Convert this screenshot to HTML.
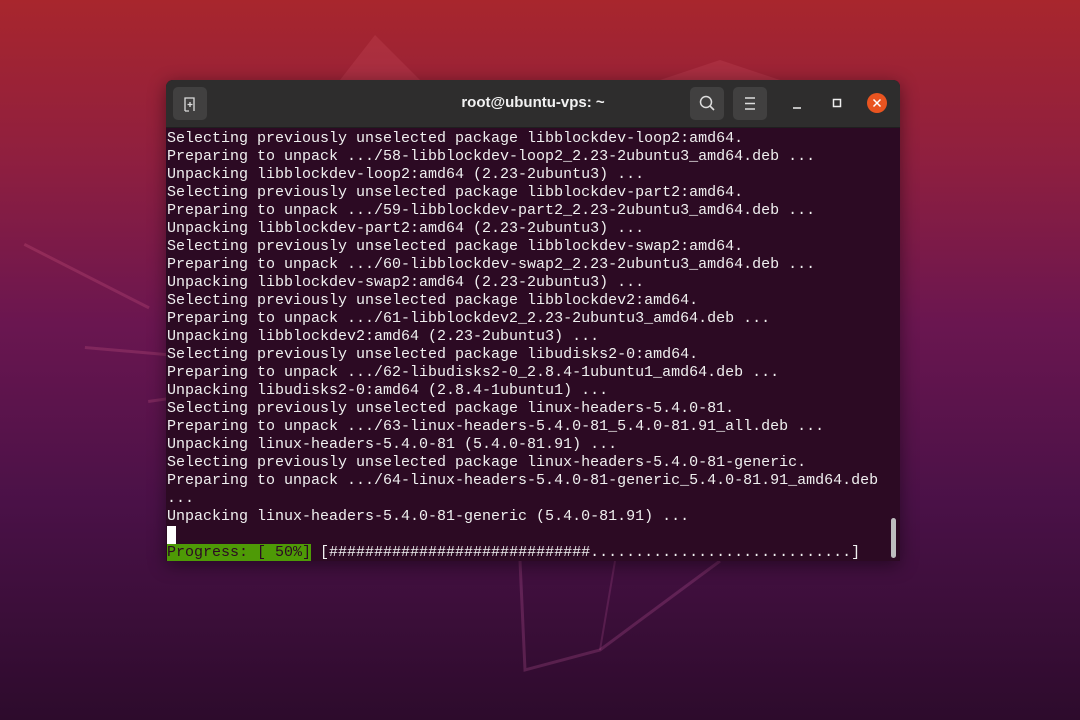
<!DOCTYPE html>
<html><head><meta charset="utf-8"><style>
html,body{margin:0;padding:0;width:1080px;height:720px;overflow:hidden}
body{background:linear-gradient(180deg,#a8262d 0%,#8f1f3f 22%,#6a1650 45%,#4a1147 70%,#2d0b2c 100%);position:relative;font-family:"Liberation Sans",sans-serif}
.streak{position:absolute;background:rgba(255,120,160,0.18);height:3px;transform-origin:0 0}
.win{position:absolute;left:166px;top:80px;width:734px;height:481px;background:#2c0a23;box-shadow:0 4px 18px rgba(0,0,0,.45);border-radius:7px 7px 0 0;overflow:hidden}
.hdr{position:absolute;left:0;top:0;width:734px;height:47px;background:#2e2d2d;border-bottom:1px solid #1f1f1f}
.btn{position:absolute;top:7px;width:34px;height:33px;background:#414040;border-radius:5px}
.title{position:absolute;left:0;width:734px;top:14px;text-align:center;color:#f2f2f2;font-weight:bold;font-size:15px}
pre{position:absolute;left:1px;top:50px;margin:0;font-family:"Liberation Mono",monospace;font-size:15px;line-height:18px;color:#f0f0f0}
.prog{background:#4e9a06;color:#2c0a23}
.cur{display:inline-block;width:9px;height:18px;background:#fff;vertical-align:top}
.sb{position:absolute;left:725px;top:438px;width:5px;height:40px;background:#bdbdbd;border-radius:3px}
</style></head><body>
<svg style="position:absolute;left:0;top:0" width="1080" height="720">
<polygon points="340,80 375,35 420,80" fill="rgba(255,130,150,0.12)"/>
<polygon points="660,80 720,60 780,80" fill="rgba(255,130,150,0.12)"/>
<path d="M520,561 L525,670 L600,650 L720,561" stroke="rgba(255,120,200,0.18)" stroke-width="3" fill="none"/>
<path d="M600,650 L615,561" stroke="rgba(255,120,200,0.15)" stroke-width="2" fill="none"/>
</svg>
<div class="streak" style="left:25px;top:243px;width:140px;transform:rotate(27deg)"></div>
<div class="streak" style="left:85px;top:346px;width:85px;transform:rotate(5deg)"></div>
<div class="streak" style="left:148px;top:400px;width:20px;transform:rotate(-8deg)"></div>
<div class="win">
<div class="hdr">
<div class="btn" style="left:7px"><svg width="34" height="33"><path d="M12 24V11h9v13M12 24h4M14.5 17.5h5M17 15v5" stroke="#ddd" stroke-width="1.3" fill="none"/></svg></div>
<div class="title">root@ubuntu-vps: ~</div>
<div class="btn" style="left:524px"><svg width="34" height="33"><circle cx="16" cy="15" r="5.5" stroke="#ddd" stroke-width="1.5" fill="none"/><path d="M20 19l4 4" stroke="#ddd" stroke-width="1.6"/></svg></div>
<div class="btn" style="left:567px"><svg width="34" height="33"><path d="M12 11h10M12 16.5h10M12 22h10" stroke="#ddd" stroke-width="1.4"/></svg></div>
<svg style="position:absolute;left:620px;top:12px" width="105" height="24"><path d="M7 16h8" stroke="#eee" stroke-width="1.5"/><rect x="47.5" y="7.5" width="7" height="7" stroke="#eee" stroke-width="1.5" fill="none"/><circle cx="91" cy="11" r="10" fill="#e95420"/><path d="M87.5 7.5l7 7M94.5 7.5l-7 7" stroke="#fff" stroke-width="1.5"/></svg>
</div>
<pre>Selecting previously unselected package libblockdev-loop2:amd64.
Preparing to unpack .../58-libblockdev-loop2_2.23-2ubuntu3_amd64.deb ...
Unpacking libblockdev-loop2:amd64 (2.23-2ubuntu3) ...
Selecting previously unselected package libblockdev-part2:amd64.
Preparing to unpack .../59-libblockdev-part2_2.23-2ubuntu3_amd64.deb ...
Unpacking libblockdev-part2:amd64 (2.23-2ubuntu3) ...
Selecting previously unselected package libblockdev-swap2:amd64.
Preparing to unpack .../60-libblockdev-swap2_2.23-2ubuntu3_amd64.deb ...
Unpacking libblockdev-swap2:amd64 (2.23-2ubuntu3) ...
Selecting previously unselected package libblockdev2:amd64.
Preparing to unpack .../61-libblockdev2_2.23-2ubuntu3_amd64.deb ...
Unpacking libblockdev2:amd64 (2.23-2ubuntu3) ...
Selecting previously unselected package libudisks2-0:amd64.
Preparing to unpack .../62-libudisks2-0_2.8.4-1ubuntu1_amd64.deb ...
Unpacking libudisks2-0:amd64 (2.8.4-1ubuntu1) ...
Selecting previously unselected package linux-headers-5.4.0-81.
Preparing to unpack .../63-linux-headers-5.4.0-81_5.4.0-81.91_all.deb ...
Unpacking linux-headers-5.4.0-81 (5.4.0-81.91) ...
Selecting previously unselected package linux-headers-5.4.0-81-generic.
Preparing to unpack .../64-linux-headers-5.4.0-81-generic_5.4.0-81.91_amd64.deb
...
Unpacking linux-headers-5.4.0-81-generic (5.4.0-81.91) ...
<span class="cur"></span>
<span class="prog">Progress: [ 50%]</span> [#############################.............................]</pre>
<div class="sb"></div>
</div>
</body></html>
